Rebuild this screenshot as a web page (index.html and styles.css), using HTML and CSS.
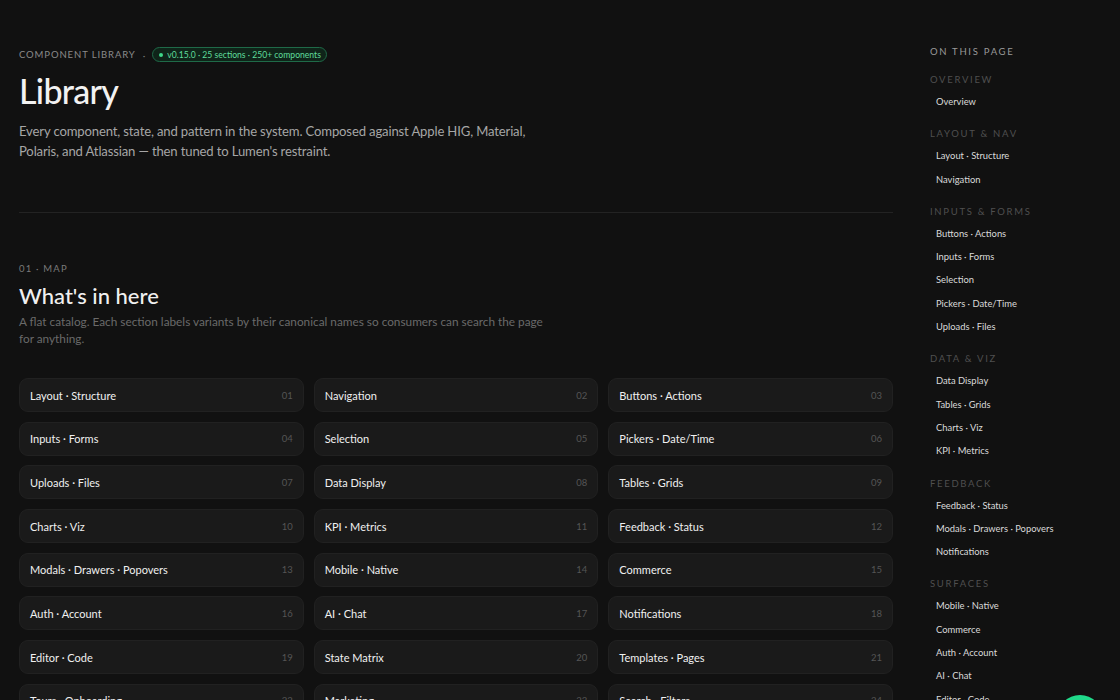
FILE: index.html
```html
<!DOCTYPE html>
<html lang="en">
<head>
  <meta charset="UTF-8" />
  <meta name="viewport" content="width=device-width, initial-scale=1.0" />
  <title>Library</title>
  <link rel="stylesheet" href="styles.css">
</head>
<body>
  <div class="page">
    <main class="main">
      <header class="hero">
        <div class="eyebrow-row">
          <span class="eyebrow">Component Library</span>
          <span class="sep">·</span>
          <span class="badge"><span class="dot"></span>v0.15.0 · 25 sections · 250+ components</span>
        </div>
        <h1>Library</h1>
        <p class="lead">Every component, state, and pattern in the system. Composed against Apple HIG, Material, Polaris, and Atlassian — then tuned to Lumen's restraint.</p>
      </header>

      <section class="map">
        <div class="section-label">01 · Map</div>
        <h2>What's in here</h2>
        <p class="desc">A flat catalog. Each section labels variants by their canonical names so consumers can search the page for anything.</p>

        <div class="grid">
          <a class="card" href="#"><span>Layout · Structure</span><span class="num">01</span></a>
          <a class="card" href="#"><span>Navigation</span><span class="num">02</span></a>
          <a class="card" href="#"><span>Buttons · Actions</span><span class="num">03</span></a>
          <a class="card" href="#"><span>Inputs · Forms</span><span class="num">04</span></a>
          <a class="card" href="#"><span>Selection</span><span class="num">05</span></a>
          <a class="card" href="#"><span>Pickers · Date/Time</span><span class="num">06</span></a>
          <a class="card" href="#"><span>Uploads · Files</span><span class="num">07</span></a>
          <a class="card" href="#"><span>Data Display</span><span class="num">08</span></a>
          <a class="card" href="#"><span>Tables · Grids</span><span class="num">09</span></a>
          <a class="card" href="#"><span>Charts · Viz</span><span class="num">10</span></a>
          <a class="card" href="#"><span>KPI · Metrics</span><span class="num">11</span></a>
          <a class="card" href="#"><span>Feedback · Status</span><span class="num">12</span></a>
          <a class="card" href="#"><span>Modals · Drawers · Popovers</span><span class="num">13</span></a>
          <a class="card" href="#"><span>Mobile · Native</span><span class="num">14</span></a>
          <a class="card" href="#"><span>Commerce</span><span class="num">15</span></a>
          <a class="card" href="#"><span>Auth · Account</span><span class="num">16</span></a>
          <a class="card" href="#"><span>AI · Chat</span><span class="num">17</span></a>
          <a class="card" href="#"><span>Notifications</span><span class="num">18</span></a>
          <a class="card" href="#"><span>Editor · Code</span><span class="num">19</span></a>
          <a class="card" href="#"><span>State Matrix</span><span class="num">20</span></a>
          <a class="card" href="#"><span>Templates · Pages</span><span class="num">21</span></a>
          <a class="card" href="#"><span>Tours · Onboarding</span><span class="num">22</span></a>
          <a class="card" href="#"><span>Marketing</span><span class="num">23</span></a>
          <a class="card" href="#"><span>Search · Filters</span><span class="num">24</span></a>
        </div>
      </section>
    </main>

    <aside class="toc">
      <div class="toc-title">On this page</div>

      <div class="toc-group">
        <div class="toc-heading">Overview</div>
        <a href="#">Overview</a>
      </div>
      <div class="toc-group">
        <div class="toc-heading">Layout &amp; Nav</div>
        <a href="#">Layout · Structure</a>
        <a href="#">Navigation</a>
      </div>
      <div class="toc-group">
        <div class="toc-heading">Inputs &amp; Forms</div>
        <a href="#">Buttons · Actions</a>
        <a href="#">Inputs · Forms</a>
        <a href="#">Selection</a>
        <a href="#">Pickers · Date/Time</a>
        <a href="#">Uploads · Files</a>
      </div>
      <div class="toc-group">
        <div class="toc-heading">Data &amp; Viz</div>
        <a href="#">Data Display</a>
        <a href="#">Tables · Grids</a>
        <a href="#">Charts · Viz</a>
        <a href="#">KPI · Metrics</a>
      </div>
      <div class="toc-group">
        <div class="toc-heading">Feedback</div>
        <a href="#">Feedback · Status</a>
        <a href="#">Modals · Drawers · Popovers</a>
        <a href="#">Notifications</a>
      </div>
      <div class="toc-group">
        <div class="toc-heading">Surfaces</div>
        <a href="#">Mobile · Native</a>
        <a href="#">Commerce</a>
        <a href="#">Auth · Account</a>
        <a href="#">AI · Chat</a>
        <a href="#">Editor · Code</a>
      </div>
    </aside>
  </div>

  <button class="fab" aria-label="Open assistant"></button>
</body>
</html>
```

FILE: styles.css
```css
* {
  box-sizing: border-box;
}
html, body {
  margin: 0;
  background: #111111;
  color: #e8e8e8;
  font-family: Lato, "Liberation Sans", sans-serif;
}
a {
  color: inherit;
  text-decoration: none;
}
.page {
  display: grid;
  grid-template-columns: 874px 190px;
  column-gap: 37px;
  padding-left: 19px;
}

/* hero */
.hero {
  padding-top: 47px;
  padding-bottom: 51px;
  border-bottom: 1px solid #232323;
}
.eyebrow-row {
  display: flex;
  align-items: center;
  gap: 7px;
  height: 15px;
}
.eyebrow {
  font-size: 9.5px;
  letter-spacing: 0.9px;
  text-transform: uppercase;
  color: #8a8a8a;
}
.sep {
  color: #777;
  font-size: 10px;
}
.badge {
  display: inline-flex;
  align-items: center;
  gap: 4px;
  height: 15px;
  padding: 0 5px 0 6px;
  border: 1px solid #1f6a48;
  background: #0f2419;
  border-radius: 999px;
  color: #5fdc9c;
  font-size: 8.6px;
}
.dot {
  width: 4px;
  height: 4px;
  border-radius: 50%;
  background: #3fd68a;
}
h1 {
  margin: 8px 0 0;
  font-size: 34px;
  font-weight: 500;
  letter-spacing: -0.7px;
  color: #f2f2f2;
  line-height: 42px;
}
.lead {
  margin: 9px 0 0;
  max-width: 530px;
  font-size: 13.1px;
  letter-spacing: -0.15px;
  line-height: 20px;
  color: #a6a6a6;
}

/* map section */
.map {
  padding-top: 50px;
}
.section-label {
  font-size: 9.5px;
  letter-spacing: 1.2px;
  text-transform: uppercase;
  color: #7a7a7a;
}
h2 {
  margin: 8px 0 0;
  font-size: 22px;
  font-weight: 500;
  color: #f0f0f0;
  line-height: 28px;
}
.desc {
  margin: 3px 0 0;
  max-width: 530px;
  font-size: 11.8px;
  line-height: 17px;
  color: #6a6a6a;
}
.grid {
  margin-top: 31px;
  display: grid;
  grid-template-columns: repeat(3, 1fr);
  column-gap: 10px;
  row-gap: 9.7px;
}
.card {
  display: flex;
  align-items: center;
  justify-content: space-between;
  height: 34px;
  padding: 0 10px;
  background: #1a1a1a;
  border: 1px solid #212121;
  border-radius: 9px;
  font-size: 11px;
  color: #f0f0f0;
}
.card .num {
  font-size: 9.5px;
  color: #555;
}

/* table of contents */
.toc {
  padding-top: 46px;
}
.toc-title {
  font-size: 9.5px;
  letter-spacing: 1.7px;
  text-transform: uppercase;
  color: #9a9a9a;
  margin-bottom: 17px;
}
.toc-group {
  margin-bottom: 15px;
}
.toc-heading {
  font-size: 9.5px;
  letter-spacing: 1.7px;
  text-transform: uppercase;
  color: #4f4f4f;
  height: 16px;
  line-height: 12px;
}
.toc a {
  display: block;
  padding-left: 6px;
  font-size: 9.4px;
  height: 23.3px;
  line-height: 23.3px;
  color: #dadada;
}

.fab {
  position: absolute;
  left: 1057px;
  top: 695px;
  width: 46px;
  height: 46px;
  border-radius: 50%;
  border: 0;
  background: #20d98a;
}
```
